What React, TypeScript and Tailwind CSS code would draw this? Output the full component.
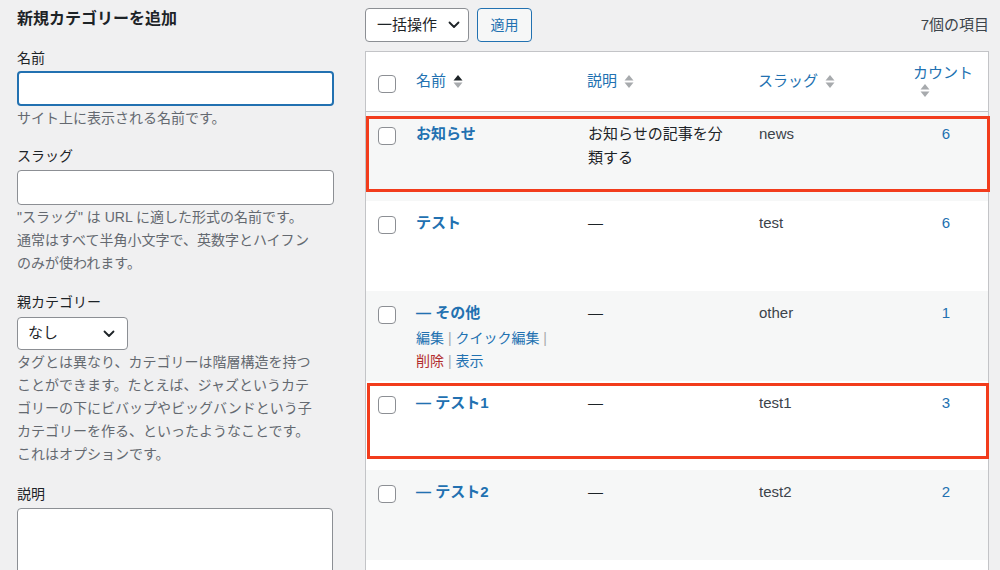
import React from "react";

const font = "font-['Liberation_Sans','Noto_Sans_CJK_JP',sans-serif]";

const SortArrows = ({ active = false }: { active?: boolean }) => (
  <svg width="10" height="17" viewBox="0 0 10 17" className="shrink-0">
    <polygon points="0.5,7.5 5,2 9.5,7.5" fill={active ? "#1d2327" : "#a7aaad"} />
    <polygon points="0.5,9.5 5,15 9.5,9.5" fill="#a7aaad" />
  </svg>
);

const Checkbox = () => (
  <div className="h-[18px] w-[18px] rounded-[4px] border border-[#8c8f94] bg-white" />
);

const Chevron = () => (
  <svg width="12" height="8" viewBox="0 0 12 8" fill="none">
    <path d="M1.5 1.5 6 6l4.5-4.5" stroke="#1d2327" strokeWidth="1.8" strokeLinecap="round" strokeLinejoin="round" />
  </svg>
);

interface Row {
  name: string;
  desc: string;
  slug: string;
  count: number;
  striped: boolean;
  tall: boolean;
  actions?: boolean;
}

const rows: Row[] = [
  { name: "お知らせ", desc: "お知らせの記事を分類する", slug: "news", count: 6, striped: true, tall: false },
  { name: "テスト", desc: "—", slug: "test", count: 6, striped: false, tall: true },
  { name: "— その他", desc: "—", slug: "other", count: 1, striped: true, tall: true, actions: true },
  { name: "— テスト1", desc: "—", slug: "test1", count: 3, striped: false, tall: false },
  { name: "— テスト2", desc: "—", slug: "test2", count: 2, striped: true, tall: true },
];

const cols = "grid grid-cols-[40px_172px_171px_155px_1fr]";

export default function App() {
  return (
    <div className={`${font} h-[570px] w-[1000px] overflow-hidden bg-[#f0f0f1] text-[#3c434a]`}>
      <div className="flex pl-[17px] pr-[11px]">
        {/* left form */}
        <div className="w-[317px] shrink-0">
          <h2 className="mt-[7px] text-[16px] font-bold leading-[24px] text-[#1d2327]">
            新規カテゴリーを追加
          </h2>

          <div className="mt-[16px] text-[14px] leading-[23px] text-[#1d2327]">名前</div>
          <div className="mt-[1px] h-[35px] rounded-[4px] border-2 border-[#2271b1] bg-white" />
          <p className="mt-[1px] text-[14px] leading-[23px] text-[#646970]">
            サイト上に表示される名前です。
          </p>

          <div className="mt-[15px] text-[14px] leading-[23px] text-[#1d2327]">スラッグ</div>
          <div className="mt-[2px] h-[35px] rounded-[4px] border border-[#8c8f94] bg-white" />
          <p className="mt-[1px] whitespace-nowrap text-[14px] leading-[23px] text-[#646970]">
            "スラッグ" は URL に適した形式の名前です。
            <br />
            通常はすべて半角小文字で、英数字とハイフン
            <br />
            のみが使われます。
          </p>

          <div className="mt-[16px] text-[14px] leading-[23px] text-[#1d2327]">親カテゴリー</div>
          <div className="mt-[3px] flex h-[33px] w-[111px] items-center justify-between rounded-[4px] border border-[#8c8f94] bg-white pl-[10px] pr-[12px] text-[15px] text-[#1d2327]">
            <span>なし</span>
            <Chevron />
          </div>
          <p className="mt-[1px] whitespace-nowrap text-[14px] leading-[23px] text-[#646970]">
            タグとは異なり、カテゴリーは階層構造を持つ
            <br />
            ことができます。たとえば、ジャズというカテ
            <br />
            ゴリーの下にビバップやビッグバンドという子
            <br />
            カテゴリーを作る、といったようなことです。
            <br />
            これはオプションです。
          </p>

          <div className="mt-[17px] text-[14px] leading-[23px] text-[#1d2327]">説明</div>
          <div className="mt-[2px] h-[120px] w-[316px] rounded-[4px] border border-[#8c8f94] bg-white" />
        </div>

        {/* right list */}
        <div className="ml-[31px] flex-1">
          <div className="mt-[8px] flex h-[34px] items-center">
            <div className="flex h-[34px] w-[104px] items-center justify-between rounded-[4px] border border-[#8c8f94] bg-white pl-[11px] pr-[8px] text-[15px] text-[#1d2327]">
              <span>一括操作</span>
              <Chevron />
            </div>
            <div className="ml-[8px] flex h-[34px] w-[55px] items-center justify-center rounded-[4px] border border-[#2271b1] bg-[#f6f7f7] text-[14px] text-[#2271b1]">
              適用
            </div>
            <div className="ml-auto text-[15px] text-[#3c434a]">7個の項目</div>
          </div>

          <div className="relative mt-[9px] border border-[#c3c4c7] bg-white">
            {/* header */}
            <div className={`${cols} h-[60px] border-b border-[#c3c4c7] text-[15px] text-[#2271b1]`}>
              <div className="flex items-center pl-[12px] pt-[5px]">
                <Checkbox />
              </div>
              <div className="flex items-center gap-[7px] pl-[10px]">
                <span>名前</span>
                <SortArrows active />
              </div>
              <div className="flex items-center gap-[7px] pl-[9px]">
                <span>説明</span>
                <SortArrows />
              </div>
              <div className="flex items-center gap-[7px] pl-[9px]">
                <span>スラッグ</span>
                <SortArrows />
              </div>
              <div className="pl-[9px] pt-[9px] leading-[24px]">
                <div>カウント</div>
                <div className="ml-[7px] mt-[-3px]">
                  <SortArrows />
                </div>
              </div>
            </div>

            {/* rows */}
            {rows.map((r) => (
              <div
                key={r.slug}
                className={`${cols} ${r.tall ? "h-[90px]" : "h-[89px]"} text-[15px] leading-[24px] ${r.striped ? "bg-[#f6f7f7]" : "bg-white"}`}
              >
                <div className="pl-[12px] pt-[15px]">
                  <Checkbox />
                </div>
                <div className="pl-[10px] pt-[10px]">
                  <div className="font-bold text-[#2271b1]">{r.name}</div>
                  {r.actions && (
                    <div className="mt-[2px] text-[14px] leading-[23px]">
                      <span className="text-[#2271b1]">編集</span>
                      <span className="text-[#a7aaad]"> | </span>
                      <span className="text-[#2271b1]">クイック編集</span>
                      <span className="text-[#a7aaad]"> |</span>
                      <br />
                      <span className="text-[#b32d2e]">削除</span>
                      <span className="text-[#a7aaad]"> | </span>
                      <span className="text-[#2271b1]">表示</span>
                    </div>
                  )}
                </div>
                <div className="pl-[10px] pr-[24px] pt-[10px] text-[#1d2327]">{r.desc}</div>
                <div className="pl-[10px] pt-[10px] text-[#3c434a]">{r.slug}</div>
                <div className="pt-[10px] text-center text-[#2271b1]">{r.count}</div>
              </div>
            ))}
            <div className="h-[40px] bg-white" />

            {/* annotation boxes */}
            <div className="absolute left-0 top-[64px] h-[76px] w-[624px] border-[3px] border-[#f23c1c]" />
            <div className="absolute left-[1px] top-[331px] h-[76px] w-[622px] border-[3px] border-[#f23c1c]" />
          </div>
        </div>
      </div>
    </div>
  );
}
